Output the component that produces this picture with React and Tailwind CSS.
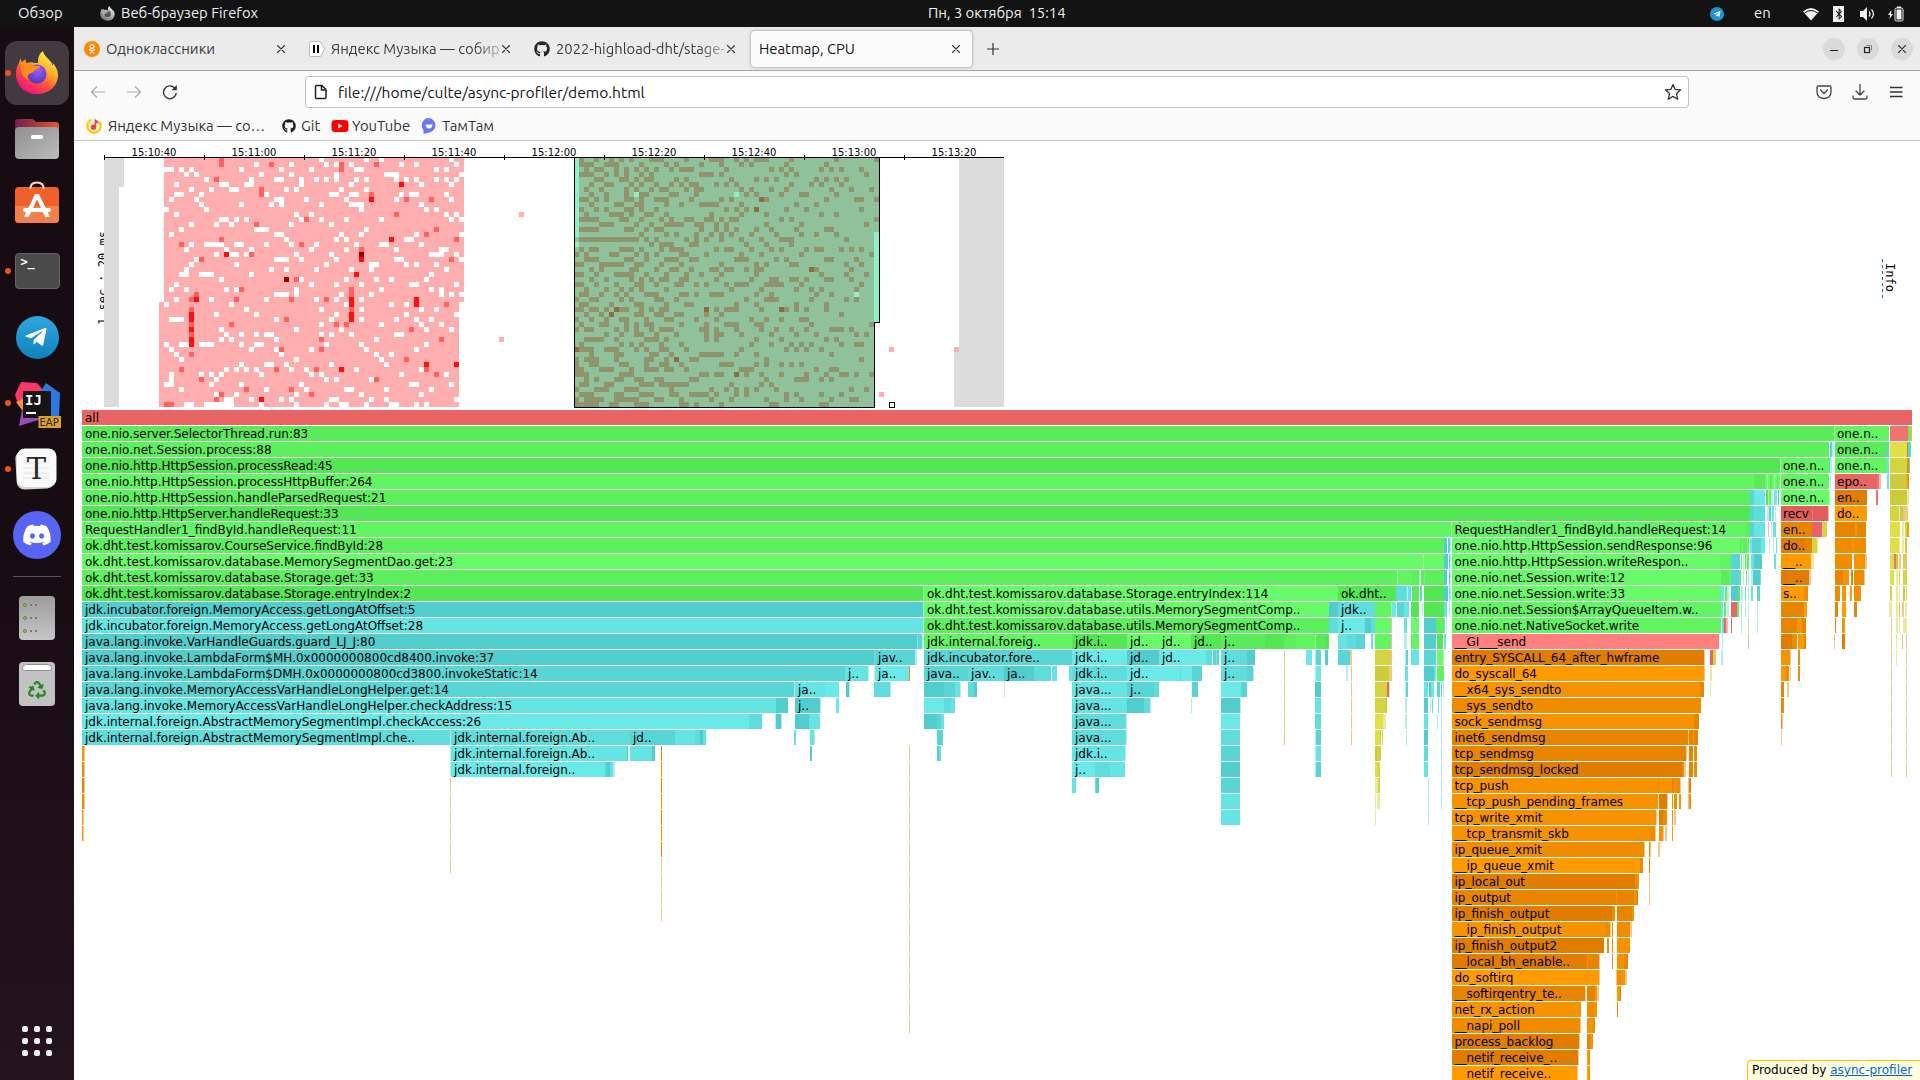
import React from "react";
import { FaGithub, FaYoutube, FaDiscord, FaTelegramPlane, FaRecycle, FaOdnoklassniki, FaBluetoothB } from "react-icons/fa";

const UI = "font-['Ubuntu','Noto_Sans',sans-serif]";

/* ---------- heat map ---------- */

const expand = (s) =>
  s.split(" ").filter(Boolean).flatMap((p) => {
    const [a, b] = p.split("-").map(Number);
    return b === undefined ? [a] : Array.from({ length: b - a + 1 }, (_, i) => a + i);
  });

// "blank columns | warm columns | hot columns | darkest columns", one entry per 20 ms row
const LEFT = `31 40 43 57|11
18 25 32 34 37 47 50 58|11 21 35 42
0 1 3 5 15 23 29 38 39 54 56|35
4 6 19 25 34 44 45 46 59|
8 17 22 23 27 30 32 34 38 40 46 48 50 54 56 58|10
2 11 12 16 17 27 37 51 57||47
5 9 13 14 24 26 35 40|19
2 3 7 20 33 34 37 38 47 49 50 56|19 41
1 6 22 23 28 36 46 57|48 53|41
7 15 21 23 31 37 38 39 51|
0 8 39 52 54|
2 26 29 56 58|46
11 12 14 16 27 31 36 43 57 59|28
5 10 13 25 33|18
3 18 19 20 40|54
1 22 23 35 39 50 59|52
24 34 36 48 49|11 58|45
5 8 9 10 11 14 15 20 25 30 38 43 44 51|3 27
4 12 17 29 36 46 55 56|39
10 13 14 16 26 33 53 54 55 58|17|12|39
6 22 23 24 27 34 46 47 59|7 57|39
5 14 32 41 42 48 50 54|
4 21 24 30 37 41 56|
3 4 7 8 9 17 53||38
11 27 36 42 45 52|26||24
2 29 34 39 49 50 58|
1 4 12 14 26 43 53 55|15 37
22 23 24 26 35 41 55 57 59|6 37
2 9 20 30 34 39|5 14 25 32|6 37 50
0 13 36 45 48|56|37 50
16 31 39 51 54|5 37
10 18 34 48 58||5 37
1 2 3 22 33 39 46 50 53|24|5 37
31 43 51 55|5 13 34 36
11 26 35 52 57|49|5
12 15 18 20 21 31 33 37 46 47|5
11 13 22 42|31 55|5
0 3 4 7 8 9 15 18 19 32 39 52||5
1 17 22 29 40 50|23 31
2 23 42 45|5
3 26 43|48
15 20 21 24 33 44||52 58
12 14 16 18 25 28 38 51|3 22 30 52|35
1 7 9 11 19 29 31 47 56|54
1 10 32 34 41|7 42
0 1 9 15 27 49 50 57|
3 20 28 36 37 44 53|16 25
10 14 26 39 51|11 29
12 13 17 23 25 33 34 41 44 58|10|19
4 5 8-13 19 26 32 35 36 40 45 46 50 52|0 1`.split("\n");

// "cooler columns | hot columns | empty columns" inside the selection
const RIGHT = `1 4 7 9 11 15-17 22 27-29 32 34 36-38 43 52 60
1-3 6-8 13 18 20 25 29 33 35 42 50
2 4 5 8 10 12 14 16 19 21-23 30 39 41 43 49 51 53 57
1-3 6 8 10 13 15 25-27 29 42 44 58
4 5 9 10 12 14 15 20 22 31 36 38 40 48 50 52 54
3 6 7 11 13 16 19 21 23 24 28 30 32 43 47 49 53
2 5 10 12 15 17 18 22 24 25 33 35 39 42 51 55 59
3 6 10 13 14 19 20 24 34 36 41 45 46 52||12 32
1 2 4 6 10 11 13 16-18 23 29 31 38 50 56 57 60|37
3 8 9 12 13 18 21 25-28 33 44 48
1 4 6 10 11 13 16 30 32 34 42 46 57|36
2 7-9 11 14 15 18 27 33 38 49 52
1-4 9 10 13 17 19 22 23 26 27 29 31 32 41 43 60
5-7 12 15 18-21 24 25 28 30 38 45 58
1-4 10 11 14 16 17 25 28 30 32 36 39 44 50 51
13 18 20 24 27 29 31 35 40 45 48 52
1-12 14 16 22 24 26 29 33 37 41-43 54
15 17-19 23 24 34 38 43
1 3 4 9-11 13 17 19-21 28 30 31 35 39 41 46 48 49 53 55 57
0 2 7 8 12 14 16 21 22 26 33 37 45 59
2-4 10 11 14 18-20 23 24 32-34 40 42 50 51 56
0 1 5-9 12 13 17 21 29 36 38 43 44 54 57
3 5 11 12 16 19 20 23 27 28 30 31 34 36 37 48 55|47
0 1 4 8-11 14 18 22 25 29 36 49 54 58
3 6 11 13 15 17 18 21 22 28 35 39 40 43 44 46 50 51 55
0 1 4 8 12 13 16 20 21 24 26 30 32-34 38-41 45 57
2 6 9 11 13 18 31 37 44 47 49 56
1 2 5 8 10 14-16 21 22 24 27-29 36 39 48 51||56
0 3 4 9 11 16 17 20 34 38-40 47 54 56
1 2 7 12 13 18 22 23 32 36 44 50
0 1 3 4 6 9 10 13 15 17 18 28 30-32 37 42 44 46 50|8 26 41
2 5 12 13 16 17 20 21 26 29 53|7
0 3 6 9 10 14 18 19 24 28 35 38 41 45 46
1 5 6 10 12 14 15 21 26 30-32 36 37 47 59
0 2 3 8 10 12 15 17-19 25 26 28 32 37 40 43 46 51-53 55
6 9 12 13 16 20 26 28 29 33 39 44 48 56 58
2-5 8 14-16 18 26 28 36 41 50 52
1 9 11 13 17 21 35 39 43 45 47 53 56 57
1-3 6-8 12 14 17 18 22 33 42 44 46 49|0
3 8 9 15 16 19 25-29 32 36 51
0 2-4 8 14 15 18 23 24 38 57|20
0 3 4 9 10 14 17 18 21 29-31 36 38 41 43 45
0 1 5-7 11 14-16 18 19 22 33-35 48 51 52
0-2 9-11 25 26 28 29 34 37 41 46 50 53 54 56 59|32
2 4 8 9 12 13 16 17 23 24 38 44-46 49 51
1 2 6 7 13-15 17-22 31 37 39
0 4-6 10-12 19 27 30 32 34 36 40 55 58
1-3 8 9 13-15 19 20 23-26 28 32 34 42 44 49 53
0 2-5 8-12 16 17 21 27 31 38 42 45 51 55 56
0-4 7 8 12-14 21 22 24 29 39 40 49 50`.split("\n");

const GX = 104;
const GY = 157;

function Cell({ c, r, fill, w = 1, h = 1 }) {
  return <rect x={GX + c * 5} y={GY + r * 5} width={w * 5} height={h * 5} fill={fill} />;
}

function HeatMap() {
  const cells = [];
  const put = (c, r, fill) => cells.push(<Cell key={`${c}-${r}-${fill}`} c={c} r={r} fill={fill} />);
  LEFT.forEach((line, r) => {
    const [blank, warm, hot, dark] = line.split("|").map((p) => expand(p || ""));
    blank.forEach((c) => put(12 + c, r, "#ffffff"));
    (warm || []).forEach((c) => put(12 + c, r, "#ff6060"));
    (hot || []).forEach((c) => put(12 + c, r, "#ff1010"));
    (dark || []).forEach((c) => put(12 + c, r, "#9c0000"));
  });
  RIGHT.forEach((line, r) => {
    const [cool, hot, empty] = line.split("|").map((p) => expand(p || ""));
    cool.forEach((c) => put(94 + c, r, "#8f946c"));
    (hot || []).forEach((c) => put(94 + c, r, "#8f6b44"));
    (empty || []).forEach((c) => put(94 + c, r, "#8ff0c8"));
  });
  const labels = ["15:10:40", "15:11:00", "15:11:20", "15:11:40", "15:12:00", "15:12:20", "15:12:40", "15:13:00", "15:13:20"];
  return (
    <svg className="block h-[269px] w-[1846px] shrink-0" viewBox="74 141 1846 269" shapeRendering="crispEdges">
      <text transform="translate(107 325) rotate(-90)" fontFamily="DejaVu Sans Mono, monospace" fontSize="12">1 sec : 20 ms</text>
      <rect x="104" y="150" width="900" height="257" fill="#fff" />
      <Cell c={0} r={0} w={4} h={6} fill="#dcdcdc" />
      <Cell c={0} r={6} w={3} h={44} fill="#dcdcdc" />
      <Cell c={171} r={0} w={9} h={39} fill="#dcdcdc" />
      <Cell c={170} r={39} w={10} h={11} fill="#dcdcdc" />
      <Cell c={12} r={0} w={60} h={29} fill="#ffaeb0" />
      <Cell c={11} r={29} w={1} h={1} fill="#ffaeb0" />
      <Cell c={11} r={30} w={60} h={20} fill="#ffaeb0" />
      <Cell c={12} r={29} w={59} h={1} fill="#ffaeb0" />
      <Cell c={94} r={0} w={61} h={33} fill="#8fc29a" />
      <Cell c={94} r={33} w={60} h={17} fill="#8fc29a" />
      <Cell c={94} r={0} h={16} fill="#8ff0c8" />
      <Cell c={94} r={17} h={1} fill="#8ff0c8" />
      <Cell c={154} r={15} h={18} fill="#8ff0c8" />
      {cells}
      {[[83, 11], [79, 36], [157, 38], [170, 38], [155, 47]].map(([c, r]) => (
        <Cell key={c} c={c} r={r} fill="#ffaeb0" />
      ))}
      <path d="M574.5 157V407.500H874.500V322.500H879.500V157" fill="none" stroke="#000" />
      <rect x="889.500" y="402.500" width="5" height="5" fill="#ffffc0" stroke="#000" />
      <rect x="104" y="157" width="900" height="1" fill="#000" />
      {labels.map((t, i) => (
        <g key={t}>
          <rect x={104 + i * 100} y="155" width="1" height="5" fill="#000" />
          <text x={154 + i * 100} y="156" textAnchor="middle" fontFamily="DejaVu Sans, sans-serif" fontSize="10">{t}</text>
        </g>
      ))}
      <path d="M1882.500 259V298" stroke="#1767c0" strokeDasharray="3 3" />
      <text transform="translate(1885.500 263) rotate(90)" fontFamily="DejaVu Sans Mono, monospace" fontSize="12">Info</text>
    </svg>
  );
}

/* ---------- flame graph ---------- */

const SHADE = {
  g0: "#54e654", g1: "#59eb59", g2: "#5eef5e", g3: "#63f463", g4: "#69fa69", g5: "#a8f5a8",
  c0: "#52cdcd", c1: "#5ad5d5", c2: "#60dcdc", c3: "#66e3e3", c4: "#6be8e8", c5: "#b4eded",
  o0: "#e07d00", o1: "#e88500", o2: "#f08c00", o3: "#f79300", o4: "#ff9a00", o5: "#f6c688",
  y0: "#cbcb3b", y1: "#d4d440", y2: "#e0e046", y5: "#eaea9c",
  r0: "#e35c5c", r1: "#e96565", r2: "#f27272", r3: "#ff7e7e", r5: "#f6b4b4",
};

// one line per stack depth: "start end shade label", frames separated by ";"
const FRAMES = `82 1912 r1 all
82 1834 g1 one.nio.server.SelectorThread.run:83;1834 1835 g5;1835 1889 g3 one.n..;1890 1908 r2;1908 1910 g2;1910 1912 y0
82 1829 g2 one.nio.net.Session.process:88;1830 1832 c1;1832 1834 c5;1835 1887 g1 one.n..;1887 1889 c1;1890 1907 y2;1907 1908 o1;1908 1911 c1
82 1780 g0 one.nio.http.HttpSession.processRead:45;1780 1781 g5;1781 1829 g3 one.n..;1829 1830 c1;1830 1832 c5;1835 1887 g3 one.n..;1887 1889 c3;1890 1907 y1;1907 1909 o2;1909 1910 c1
82 1754 g3 one.nio.http.HttpSession.processHttpBuffer:264;1754 1765 g1;1765 1780 g4;1767 1768 g5;1770 1772 g1;1774 1775 g5;1777 1778 g1;1781 1829 g3 one.n..;1830 1831 c5;1835 1877 r1 epo..;1877 1879 r2;1879 1881 r5;1887 1889 c3;1890 1907 y0;1907 1909 o3
82 1750 g2 one.nio.http.HttpSession.handleParsedRequest:21;1750 1754 c1;1754 1765 c4;1766 1768 g0;1768 1769 g5;1769 1771 g3;1771 1773 c5;1774 1777 c4;1778 1779 c0;1781 1829 g4 one.n..;1829 1830 g5;1835 1867 o0 en..;1876 1878 r2;1890 1907 y0;1907 1909 y5
82 1750 g0 one.nio.http.HttpServer.handleRequest:33;1750 1754 c1;1754 1765 c2;1767 1769 c5;1769 1771 c1;1772 1774 c4;1775 1776 c5;1781 1812 r0 recv;1812 1813 r2;1813 1828 r0;1828 1829 r5;1835 1867 o4 do..;1890 1899 y1;1899 1900 y5;1900 1903 y0;1903 1905 r5;1905 1907 y2;1907 1908 o5
82 1451 g3 RequestHandler1_findById.handleRequest:11;1451 1452 g5;1452 1745 g3 RequestHandler1_findById.handleRequest:14;1745 1750 g2;1750 1754 c1;1754 1765 c3;1768 1769 r5;1771 1772 c5;1773 1776 c3;1781 1812 o1 en..;1812 1822 r1;1822 1823 o5;1823 1827 y1;1835 1866 o1;1855 1857 o3;1890 1900 y2;1902 1904 y5;1905 1907 y1;1907 1909 o4
82 1444 g2 ok.dht.test.komissarov.CourseService.findById:28;1444 1447 c0;1448 1450 c1;1450 1451 c5;1452 1740 g4 one.nio.http.HttpSession.sendResponse:96;1740 1749 g2;1742 1743 g4;1747 1748 g4;1750 1752 c4;1752 1761 c1;1761 1765 c4;1769 1770 c5;1773 1774 c5;1776 1777 c3;1781 1805 o0 do..;1805 1812 o1;1812 1817 y1;1817 1818 y5;1835 1866 o2;1852 1854 o3;1890 1899 y2;1899 1900 y5;1902 1904 y5;1905 1907 y0
82 1423 g4 ok.dht.test.komissarov.database.MemorySegmentDao.get:23;1423 1424 g5;1424 1444 g4;1444 1448 c0;1449 1450 c1;1450 1451 c5;1452 1720 g4 one.nio.http.HttpSession.writeRespon..;1720 1731 g3;1731 1740 c1;1741 1742 g3;1743 1744 c5;1745 1749 g2;1746 1747 g5;1751 1754 c3;1754 1762 c0;1774 1776 c3;1781 1811 o4 __..;1811 1814 y5;1835 1852 o2;1854 1865 o3;1865 1867 o5;1890 1894 y2;1894 1896 r2;1896 1898 y0;1899 1901 o5;1903 1907 y1;1906 1907 r5
82 1397 g2 ok.dht.test.komissarov.database.Storage.get:33;1397 1398 g5;1398 1412 g3;1412 1419 g2;1419 1420 g5;1421 1444 g2;1424 1425 g4;1444 1447 c0;1449 1450 c1;1450 1451 c5;1452 1721 g4 one.nio.net.Session.write:12;1721 1729 g1;1729 1731 g3;1731 1740 c1;1740 1741 g3;1743 1744 c5;1746 1747 g3;1748 1749 c5;1751 1753 c5;1753 1760 c0;1760 1761 c3;1781 1809 o0 __..;1809 1811 o5;1835 1843 o1;1843 1849 o3;1851 1853 o1;1854 1864 o2;1864 1865 o5;1890 1894 y2;1896 1898 y5;1899 1900 y1;1903 1907 y1
82 923 g0 ok.dht.test.komissarov.database.Storage.entryIndex:2;923 924 g5;924 1338 g4 ok.dht.test.komissarov.database.Storage.entryIndex:114;1338 1396 g0 ok.dht..;1396 1406 c2;1406 1411 c3;1407 1408 c5;1412 1419 g1;1420 1422 c1;1424 1444 g0;1444 1448 c0;1449 1450 c4;1450 1451 c5;1452 1721 g4 one.nio.net.Session.write:33;1721 1724 c4;1725 1727 g3;1727 1729 c5;1731 1738 c0;1738 1740 g1;1741 1743 c5;1745 1746 c3;1748 1749 c5;1751 1753 c3;1757 1760 c1;1781 1804 o4 s..;1804 1808 o2;1835 1840 o2;1842 1846 o3;1850 1852 o4;1854 1859 o2;1859 1861 o3;1890 1892 y1;1896 1898 y5;1899 1900 y5;1903 1905 y0;1906 1907 y2
82 923 c0 jdk.incubator.foreign.MemoryAccess.getLongAtOffset:5;923 924 c5;924 1329 g4 ok.dht.test.komissarov.database.utils.MemorySegmentComp..;1329 1338 c0;1338 1375 c2 jdk..;1375 1391 g3;1391 1392 g5;1392 1396 c4;1397 1404 c1;1404 1409 c3;1411 1419 g0;1422 1423 c5;1424 1444 g0;1444 1447 c3;1449 1450 c5;1452 1721 g3 one.nio.net.Session$ArrayQueueItem.w..;1721 1723 c4;1724 1726 g2;1727 1729 c5;1731 1737 r1;1737 1739 g3;1741 1742 c5;1745 1746 c5;1748 1749 c5;1757 1758 c5;1781 1804 o1;1804 1807 o4;1835 1838 o1;1842 1846 o4;1854 1857 o1;1889 1892 y5;1896 1898 y5;1899 1900 y1;1902 1904 o5;1905 1907 y5
82 923 c3 jdk.incubator.foreign.MemoryAccess.getLongAtOffset:28;923 924 c5;924 1329 g2 ok.dht.test.komissarov.database.utils.MemorySegmentComp..;1329 1338 c2;1338 1365 c4 j..;1365 1371 c0;1371 1375 c2;1375 1391 g4;1391 1392 r5;1404 1407 c3;1411 1419 g4;1424 1436 c0;1436 1444 g2;1444 1445 c3;1446 1447 c5;1452 1721 g3 one.nio.net.NativeSocket.write;1722 1724 c2;1724 1726 r1;1726 1728 r5;1731 1732 r1;1741 1742 c5;1748 1749 g5;1757 1758 c5;1781 1797 o1;1797 1802 o3;1802 1806 o1;1835 1836 o2;1842 1845 o3;1891 1892 o5;1896 1898 y5;1899 1900 y5;1903 1907 y5
82 917 c0 java.lang.invoke.VarHandleGuards.guard_LJ_J:80;917 918 c4;918 922 c1;922 923 c5;924 1072 g3 jdk.internal.foreig..;1072 1127 g0 jdk.i..;1127 1159 g4 jd..;1159 1191 g4 jd..;1191 1221 g0 jd..;1221 1247 g1 j..;1247 1265 g1;1265 1284 g0;1284 1296 g2;1296 1306 g3;1306 1315 g3;1315 1316 g5;1316 1325 g1;1325 1329 g0;1338 1347 c3;1347 1356 c2;1356 1365 c1;1371 1373 c3;1375 1391 g3;1391 1392 r5;1404 1407 c5;1411 1419 g3;1424 1436 c0;1437 1443 g0;1444 1446 c3;1452 1710 r3 __GI___send;1710 1719 r3;1722 1723 c5;1748 1749 r5;1781 1792 o0;1792 1797 o2;1798 1804 o4;1804 1806 o1;1834 1835 o5;1842 1845 o0;1891 1892 o5;1896 1897 y5;1902 1903 o5;1906 1907 r5
82 874 c0 java.lang.invoke.LambdaForm$MH.0x0000000800cd8400.invoke:37;874 875 c3;875 915 c1 jav..;915 917 c5;924 1068 c1 jdk.incubator.fore..;1068 1072 c1;1072 1127 c4 jdk.i..;1127 1159 c0 jd..;1159 1191 c4 jd..;1191 1206 c4;1206 1212 c2;1213 1219 c1;1216 1217 c4;1221 1247 c2 j..;1247 1255 c0;1284 1285 o5;1306 1312 c4;1315 1316 c5;1316 1321 c1;1325 1328 c0;1338 1350 c1;1350 1352 o5;1375 1391 y1;1391 1392 r5;1405 1406 c5;1406 1408 c1;1411 1419 c3;1424 1436 c1;1437 1443 g4;1443 1444 g5;1452 1704 o0 entry_SYSCALL_64_after_hwframe;1704 1705 o5;1710 1713 r1;1713 1716 y1;1721 1723 c5;1781 1790 o3;1790 1791 o5;1798 1800 o2;1891 1892 o5;1896 1897 y5;1906 1907 o5
82 845 c1 java.lang.invoke.LambdaForm$DMH.0x0000000800cd3800.invokeStatic:14;845 868 c3 j..;868 869 c5;874 875 c5;875 909 c4 ja..;909 910 o2;924 968 c1 java..;968 1004 c2 jav..;1004 1034 c0 ja..;1034 1051 c2;1052 1057 c3;1069 1072 c3;1072 1127 c2 jdk.i..;1127 1159 c4 jd..;1159 1192 c4;1180 1181 c2;1192 1202 c1;1221 1247 c2 j..;1247 1253 c1;1253 1254 c5;1284 1285 o5;1315 1316 c5;1316 1321 c4;1346 1348 c5;1351 1352 o5;1375 1389 y0;1389 1391 y2;1391 1392 r5;1405 1408 c3;1424 1434 c0;1434 1436 c3;1437 1444 g3;1441 1442 g1;1452 1704 o4 do_syscall_64;1704 1705 o5;1710 1712 y5;1781 1785 o4;1785 1789 o2;1790 1791 o5;1798 1800 o2;1891 1892 o5;1906 1907 o5
82 794 c1 java.lang.invoke.MemoryAccessVarHandleLongHelper.get:14;794 795 c5;795 825 c3 ja..;825 833 c4;833 839 c4;846 849 c0;849 850 c5;874 890 c2;890 891 c5;924 944 c0;944 955 c1;955 960 c3;960 961 c5;968 974 c2;974 977 c0;1004 1005 c5;1072 1127 c3 java...;1127 1154 c1 j..;1154 1159 c2;1192 1198 c1;1221 1241 c4;1241 1247 c1;1284 1285 o5;1315 1321 c0;1351 1352 o5;1375 1387 y1;1387 1389 r1;1389 1390 y5;1405 1406 c5;1406 1408 c1;1424 1428 c3;1429 1431 c0;1431 1434 c4;1437 1440 c1;1441 1442 c3;1443 1444 c5;1452 1700 o3 __x64_sys_sendto;1700 1704 o1;1710 1711 y5;1781 1784 o1;1787 1789 o5;1891 1892 o5;1906 1907 o5
82 776 c3 java.lang.invoke.MemoryAccessVarHandleLongHelper.checkAddress:15;776 788 c0;795 820 c0 j..;820 821 c5;836 839 c4;924 944 c4;944 951 c2;951 955 c3;1072 1127 c3 java...;1127 1144 c0;1144 1150 c2;1150 1151 c5;1191 1192 c5;1221 1240 c0;1240 1241 c5;1284 1285 o5;1315 1321 c3;1351 1352 o5;1375 1386 y1;1386 1387 y0;1405 1407 c5;1424 1428 c0;1430 1431 c5;1432 1433 c3;1438 1439 c3;1441 1442 c5;1452 1701 o2 __sys_sendto;1781 1783 o1;1783 1784 o3;1891 1892 o5;1906 1907 o5
82 749 c4 jdk.internal.foreign.AbstractMemorySegmentImpl.checkAccess:26;749 762 c2;775 776 c5;776 781 c0;781 782 c5;795 809 c0;809 820 c3;924 937 c0;937 941 c1;941 944 c3;1072 1126 c2 java...;1126 1127 c5;1221 1240 c4;1284 1285 o5;1315 1321 c2;1351 1352 o5;1375 1383 y2;1383 1386 y5;1405 1407 c5;1424 1428 c3;1437 1438 c5;1441 1442 c5;1452 1694 o3 sock_sendmsg;1694 1699 o1;1781 1782 o2;1782 1783 o5;1891 1892 o5;1906 1907 o5
82 450 c2 jdk.internal.foreign.AbstractMemorySegmentImpl.che..;450 451 c5;451 630 c2 jdk.internal.foreign.Ab..;630 660 c1 jd..;660 675 c1;675 695 c3;695 700 c2;700 703 c0;703 706 c3;794 796 c3;810 814 c3;814 815 c5;937 943 c1;1072 1126 c2 java...;1126 1127 c5;1221 1240 c2;1284 1285 o5;1315 1316 c5;1316 1321 c1;1351 1352 o5;1375 1380 y2;1380 1381 y0;1382 1383 y1;1406 1407 c5;1424 1428 c0;1441 1442 c5;1452 1688 o1 inet6_sendmsg;1688 1689 o5;1689 1698 o1;1693 1694 o3;1781 1782 o5;1891 1892 o5;1906 1907 o5
82 84 o3;84 85 o5;450 451 c5;451 627 c3 jdk.internal.foreign.Ab..;627 628 c0;630 652 c3;652 655 c0;661 662 o1;810 812 c0;909 910 o5;937 939 c0;939 941 c3;1072 1125 c3 jdk.i..;1125 1126 c5;1221 1240 c1;1315 1316 c5;1316 1321 c3;1375 1377 y0;1377 1381 y1;1424 1428 c2;1441 1442 c5;1452 1686 o1 tcp_sendmsg;1686 1687 o5;1689 1693 o1;1694 1697 o2;1891 1892 o5;1906 1907 o5
82 84 o2;84 85 o5;450 451 c5;451 605 c4 jdk.internal.foreign..;605 607 c1;607 610 c0;610 613 c3;613 615 c5;661 662 o2;909 910 o5;1072 1095 c4 j..;1095 1110 c2;1110 1118 c3;1118 1125 c3;1221 1240 c0;1315 1316 c5;1316 1321 c1;1375 1378 y2;1378 1380 y1;1424 1428 c3;1441 1442 c5;1452 1682 o0 tcp_sendmsg_locked;1682 1684 o2;1684 1686 o5;1689 1693 o1;1694 1697 o2;1891 1892 o5;1906 1907 o5
82 84 o1;84 85 o5;450 451 o5;661 662 o1;909 910 o5;1072 1076 c3;1095 1096 c3;1096 1099 c0;1221 1240 c1;1375 1378 y5;1378 1380 y1;1428 1429 c5;1441 1442 c5;1452 1658 o3 tcp_push;1658 1659 o2;1659 1672 o3;1672 1674 o1;1674 1676 o3;1676 1680 o2;1680 1681 o5;1688 1689 o5;1689 1691 o1
82 84 o2;84 85 o5;450 451 o5;661 662 o2;909 910 o5;1221 1240 c3;1375 1376 y5;1377 1380 y5;1428 1429 c5;1441 1442 c5;1452 1658 o3 __tcp_push_pending_frames;1659 1667 o0;1667 1668 o5;1672 1673 o2;1674 1677 o2;1679 1681 o3;1688 1689 o5;1689 1691 o2
82 83 o3;83 84 o5;450 451 o5;661 662 o1;909 910 o5;1221 1240 c3;1375 1376 y5;1428 1429 c5;1452 1656 o3 tcp_write_xmit;1656 1657 o5;1659 1663 o0;1663 1667 o2;1672 1673 o3;1674 1676 o5
82 83 o3;83 84 o5;450 451 o5;661 662 o2;909 910 o5;1452 1650 o3 __tcp_transmit_skb;1650 1655 o2;1655 1656 o5;1659 1663 o3;1663 1664 o5;1665 1667 o5;1672 1673 o4
450 451 o5;661 662 o1;909 910 o5;1452 1642 o2 ip_queue_xmit;1642 1644 o2;1644 1645 o5;1649 1650 o1;1650 1651 o5;1658 1660 o5
450 451 o5;661 662 o5;909 910 o5;1452 1640 o4 __ip_queue_xmit;1640 1643 o2;1649 1650 o1
661 662 o5;909 910 o5;1452 1635 o0 ip_local_out;1635 1638 o2;1638 1639 o3;1649 1650 o5
661 662 o5;909 910 o5;1452 1616 o1 ip_output;1616 1617 o3;1617 1634 o1;1634 1636 o3;1636 1638 o1;1649 1650 o5
661 662 o5;909 910 o5;1452 1612 o0 ip_finish_output;1612 1615 o2;1617 1632 o1;1632 1634 o3
909 910 o5;1452 1605 o3 __ip_finish_output;1605 1610 o2;1610 1611 o5;1612 1613 o2;1617 1630 o2;1630 1632 o5
909 910 o5;1452 1604 o0 ip_finish_output2;1607 1609 o2;1612 1613 o2;1617 1629 o3;1629 1630 o2
909 910 o5;1452 1587 o0 __local_bh_enable..;1587 1588 o3;1588 1599 o1;1599 1600 o5;1612 1613 o2;1617 1624 o3;1624 1628 o1
909 910 o5;1452 1587 o4 do_softirq;1587 1588 o3;1588 1599 o4;1599 1600 o5;1616 1617 o5;1617 1621 o2;1621 1625 o3;1625 1627 o5
909 910 o5;1452 1585 o1 __softirqentry_te..;1585 1586 o5;1587 1595 o1;1595 1597 o3;1597 1599 o5;1617 1619 o4;1619 1621 o2
909 910 o5;1452 1581 o3 net_rx_action;1587 1594 o2;1594 1597 o3;1617 1618 o2
909 910 o5;1452 1580 o2 __napi_poll;1580 1581 o5;1587 1593 o3;1593 1595 o2
1452 1579 o0 process_backlog;1579 1580 o5;1587 1590 o1;1590 1593 o3
1452 1578 o0 __netif_receive_..;1578 1579 o5;1587 1589 o4;1589 1590 o2
1452 1577 o4 __netif_receive..;1577 1578 o5;1587 1589 o4;1589 1590 o3`
  .split("\n")
  .map((l) =>
    l.split(";").map((f) => {
      const [a, b, s, ...t] = f.split(" ");
      return { a: +a, b: +b, s, t: t.join(" ") };
    })
  );

function FlameGraph() {
  return (
    <svg className="block h-[670px] w-[1846px] shrink-0" viewBox="74 410 1846 670">
      {FRAMES.map((row, i) => (
        <g key={i}>
          {row.map((f, j) => (
            <rect key={j} x={f.a} y={410 + i * 16} width={f.b - f.a} height="15" fill={SHADE[f.s]} shapeRendering="crispEdges" />
          ))}
          {row.filter((f) => f.t).map((f, j) => (
            <text key={j} x={f.a + (f.a > 1700 ? 2 : f.a > 1400 ? 2.5 : 3)} y={422 + i * 16} fontFamily="DejaVu Sans, sans-serif" fontSize="12">{f.t}</text>
          ))}
        </g>
      ))}
    </svg>
  );
}

/* ---------- icons ---------- */

function FirefoxIcon({ className, grey }) {
  const id = grey ? "ffg" : "ffc";
  return (
    <svg className={className} viewBox="0 0 44 44">
      <defs>
        <linearGradient id={id} x1="0.8" y1="0.05" x2="0.25" y2="0.95">
          <stop offset="0" stopColor={grey ? "#e8e8e8" : "#fff44f"} />
          <stop offset="0.35" stopColor={grey ? "#c4c4c4" : "#ffb02a"} />
          <stop offset="0.68" stopColor={grey ? "#9a9a9a" : "#ff4a40"} />
          <stop offset="1" stopColor={grey ? "#777" : "#ee1480"} />
        </linearGradient>
        <radialGradient id={id + "2"} cx="0.55" cy="0.3" r="0.7">
          <stop offset="0" stopColor={grey ? "#666" : "#a05cf0"} />
          <stop offset="1" stopColor={grey ? "#444" : "#4b3bc4"} />
        </radialGradient>
      </defs>
      <path d="M28 0c1 5 5 7 8 11 1 1 1 2 2 4 0-2 0-3-1-4 4 4 6 9 6 13 0 11-9 19-21 19S1 35 1 23c0-5 1-8 3-11 0-2 1-3 2-5 0 2 0 3 1 4 1-1 2-2 4-3-1 2 0 3 1 4 3-1 5-1 7 0h4c0-6 1-9 5-12z" fill={`url(#${id})`} />
      <circle cx="22" cy="23" r="9.500" fill={`url(#${id}2)`} />
      <path d="M6 12c3-1 6 0 8 2 2-1 4 0 5 1h6c0 2-2 3-5 4-1 1-2 3-4 3-3 1-5 4-2 7-5-2-8-6-8-11 0-2 0-4 0-6z" fill={grey ? "#aaa" : "#ff8e1e"} />
    </svg>
  );
}

function CloseX({ className = "h-2.5 w-2.5 shrink-0" }) {
  return (
    <svg className={className} viewBox="0 0 10 10">
      <path d="M1.500 1.500l7 7M8.500 1.500l-7 7" stroke="#3a3a3a" strokeWidth="1.1" strokeLinecap="round" />
    </svg>
  );
}

function Slot({ children, dot }) {
  return (
    <div className="relative flex h-[66px] w-[74px] shrink-0 items-center justify-center">
      {dot && <span className="absolute left-[5px] top-[30px] h-1.5 w-1.5 rounded-full bg-[#e95420]" />}
      {children}
    </div>
  );
}

function Dock() {
  return (
    <aside className="flex w-[74px] shrink-0 flex-col bg-gradient-to-b from-[#160c12] via-[#180c13] to-[#25131d] pt-[13px]">
      <Slot dot>
        <div className="flex h-16 w-16 items-center justify-center rounded-xl bg-[#433a40]">
          <FirefoxIcon className="h-[44px] w-[44px]" />
        </div>
      </Slot>
      <Slot>
        <svg className="h-[46px] w-[46px]" viewBox="0 0 46 46">
          <defs>
            <linearGradient id="fold" x1="0" x2="1"><stop offset="0" stopColor="#6f1f50" /><stop offset="1" stopColor="#e4582a" /></linearGradient>
            <linearGradient id="fgrey" x1="0" y1="0" x2="1" y2="1"><stop offset="0" stopColor="#8f8f8f" /><stop offset="1" stopColor="#bcbcbc" /></linearGradient>
          </defs>
          <path d="M1 6q0-3 3-3h14q2 0 3 2l1 1h20q3 0 3 3v10H1z" fill="url(#fold)" />
          <rect x="1" y="11" width="44" height="32" rx="4" fill="url(#fgrey)" />
          <rect x="17" y="19" width="12" height="4" rx="1.500" fill="#fff" />
        </svg>
      </Slot>
      <Slot>
        <svg className="mb-[2px] h-[46px] w-[46px]" viewBox="0 0 46 46">
          <path d="M16 9q0-7.500 7-7.500t7 7.500" fill="none" stroke="#f4dfb6" strokeWidth="1.800" />
          <rect x="1" y="6" width="44" height="36" rx="4" fill="#f0602a" />
          <path d="M1 25h44v13q0 4-4 4H5q-4 0-4-4z" fill="#f2804c" />
          <path d="M16.200 8q.3-2 1.200-3.300M29.800 8q-.3-2-1.200-3.300" fill="none" stroke="#f4dfb6" strokeWidth="1.800" />
          <path d="M21 13h4l11 23h-4.800L23 18.500 14.800 36H10z" fill="#fff" />
          <rect x="9" y="27" width="28" height="4" rx="2" fill="#fff" />
        </svg>
      </Slot>
      <Slot dot>
        <div className="h-9 w-[45px] rounded border border-[#646464] bg-[#4a4a4a] pl-[5px] pt-[2px] font-['DejaVu_Sans_Mono',monospace] text-[12px] font-bold leading-3 tracking-[-0.2px] text-white">&gt;_</div>
      </Slot>
      <Slot>
        <div className="flex h-[43px] w-[43px] items-center justify-center rounded-full bg-gradient-to-b from-[#2fa6df] to-[#0c82bd]">
          <FaTelegramPlane className="mr-0.5 h-6 w-6 text-white" />
        </div>
      </Slot>
      <Slot dot>
        <svg className="h-[48px] w-[48px] overflow-visible" viewBox="0 0 48 48">
          <path d="M8 3l16 1 6 7-4 14H5L2 16z" fill="#f9376b" />
          <path d="M33 4l14 10-1 26-14 4-8-26z" fill="#2f78e4" />
          <path d="M3 23l9-4 6 12-6 4z" fill="#f6923b" />
          <path d="M9 31l6-4 20 12-10 2-19 6z" fill="#a04ab8" />
          <rect x="10" y="12" width="28" height="27" fill="#151515" />
          <text x="12" y="26" fontFamily="DejaVu Sans Mono, monospace" fontWeight="700" fontSize="14" fill="#fff">IJ</text>
          <rect x="13" y="33" width="10" height="2" fill="#fff" />
          <rect x="25.500" y="37" width="22.500" height="12" fill="#dba12f" />
          <text x="26.500" y="46.500" fontFamily="DejaVu Sans, sans-serif" fontSize="10" fill="#2b2210">EAP</text>
        </svg>
      </Slot>
      <Slot dot>
        <svg className="mr-0.5 h-[42px] w-[42px]" viewBox="0 0 42 42">
          <rect x="1" y="2" width="38" height="39" rx="8" fill="#d6d6d6" transform="rotate(-3 20 22)" />
          <rect x="2" y="0.500" width="39.500" height="38.500" rx="8" fill="#fafafa" />
          <path d="M8 10h26M8 15h26M8 20h26M8 25h26M8 30h26" stroke="#e2e2e2" />
          <text x="21.500" y="31" textAnchor="middle" fontFamily="DejaVu Serif, serif" fontSize="29" fill="#2a2a2a">T</text>
        </svg>
      </Slot>
      <Slot>
        <div className="flex h-12 w-12 items-center justify-center rounded-full bg-[#5865f2]">
          <FaDiscord className="h-[30px] w-[30px] text-white" />
        </div>
      </Slot>
      <div className="mx-[13px] mt-[8px] h-px shrink-0 bg-[#5b5156]" />
      <div className="h-[8px] shrink-0" />
      <Slot>
        <div className="flex h-11 w-9 flex-col justify-around rounded bg-gradient-to-b from-[#9c9c9c] to-[#c6c6c6] py-0.5 pl-1">
          {[0, 1, 2].map((i) => (
            <div key={i} className="flex items-center gap-[3px]">
              <span className="h-1 w-1 rounded-full border border-[#5f8a3a] bg-[#9ac46a]" />
              <span className="h-0.5 w-0.5 bg-[#777]" />
              <span className="h-0.5 w-0.5 bg-[#777]" />
            </div>
          ))}
        </div>
      </Slot>
      <Slot>
        <div className="flex h-11 w-9 flex-col items-center rounded bg-[#c2c2c2] pt-0.5">
          <div className="h-[7px] w-[30px] rounded-t-md rounded-b-sm border border-[#8f8f8f] bg-white" />
          <FaRecycle className="mt-2.5 h-[18px] w-[18px] text-[#26891f]" />
        </div>
      </Slot>
      <div className="mx-auto mb-[24px] mt-auto grid grid-cols-3 gap-x-[6px] gap-y-[6px]">
        {Array.from({ length: 9 }, (_, i) => (
          <span key={i} className="h-1.5 w-1.5 rounded-[2px] bg-[#f2f2f2]" />
        ))}
      </div>
    </aside>
  );
}

function TopBar() {
  return (
    <header className={`flex h-[27px] shrink-0 items-center bg-[#131313] text-[14.8px] leading-none text-[#f0f0f0] ${UI}`}>
      <span className="ml-[18px] w-[82px] whitespace-nowrap">Обзор</span>
      <FirefoxIcon grey className="h-[15px] w-[15px]" />
      <span className="ml-1.5 w-[807px] whitespace-nowrap">Веб-браузер Firefox</span>
      <span className="w-[782px] whitespace-pre">Пн, 3 октября  15:14</span>
      <span className="flex h-3.5 w-3.5 items-center justify-center rounded-full bg-[#1f93d0]">
        <FaTelegramPlane className="h-2 w-2 text-white" />
      </span>
      <span className="ml-[30px] w-[49px]">en</span>
      <svg className="h-4 w-4" viewBox="0 0 16 16">
        <path d="M0 5.500Q8-1.500 16 5.500L8 14.500z" fill="#f2f2f2" />
        <path d="M1.500 7Q8 2 14.500 7" fill="none" stroke="#131313" strokeWidth="1" />
      </svg>
      <span className="ml-[14px] flex h-4 w-[11px] items-center justify-center bg-[#f2f2f2]">
        <FaBluetoothB className="h-3 w-2.5 text-[#131313]" />
      </span>
      <svg className="ml-4 h-4 w-4" viewBox="0 0 16 16">
        <path d="M0 5h3l4-4v14l-4-4H0z" fill="#f2f2f2" />
        <path d="M9 5.500q2 2.500 0 5M11.500 3.500q4 4.500 0 9" fill="none" stroke="#f2f2f2" strokeWidth="1.300" />
      </svg>
      <svg className="ml-3 h-4 w-4" viewBox="0 0 16 16">
        <path d="M3.500 4L0 9h2l-.5 4L5 8H3z" fill="#f2f2f2" />
        <rect x="7" y="2" width="8" height="13" rx="1.500" fill="none" stroke="#f2f2f2" />
        <rect x="9" y="0.500" width="4" height="1.500" fill="#f2f2f2" />
        <rect x="8.500" y="3.500" width="5" height="10" fill="#f2f2f2" />
      </svg>
    </header>
  );
}

function Tab({ icon, title, active, fade }) {
  return (
    <div className={`mr-1 flex h-9 w-[221px] shrink-0 items-center rounded pl-2 pr-[11px] ${active ? "bg-[#fbfbfb] text-[#15141a] shadow-[0_0_3px_rgba(0,0,0,0.45)]" : "text-[#3c3b40]"}`}>
      {icon && <span className="mr-1.5 flex w-4 shrink-0 justify-center">{icon}</span>}
      <span className={`mt-px min-w-0 flex-1 whitespace-nowrap ${fade ? "[mask-image:linear-gradient(to_right,#000_84%,rgba(0,0,0,0.25))]" : ""}`}>{title}</span>
      <CloseX />
    </div>
  );
}

function Browser() {
  return (
    <main className="flex min-w-0 flex-1 flex-col bg-white">
      <div className={`flex h-[44px] shrink-0 items-center border-b border-[#a6a6a6] bg-[#ebebeb] pl-0.5 text-[14.8px] leading-5 ${UI}`}>
        <Tab title="Одноклассники" icon={<span className="flex h-4 w-4 items-center justify-center rounded-full bg-[#ff8800]"><FaOdnoklassniki className="h-2.5 w-2.5 text-white" /></span>} />
        <Tab fade title="Яндекс Музыка — собир" icon={
          <svg className="h-4 w-4" viewBox="0 0 16 16">
            <path d="M2 .5h9.500l4 7.500-4 7.500H2Q.5 15.500.5 14V2Q.5.5 2 .5z" fill="#fff" stroke="#bbb" />
            <rect x="4" y="4" width="2" height="8" /><rect x="8" y="4" width="2" height="8" />
          </svg>} />
        <Tab fade title="2022-highload-dht/stage-" icon={<FaGithub className="h-4 w-4 text-[#24292f]" />} />
        <Tab active title="Heatmap, CPU" />
        <svg className="ml-2.5 h-3.5 w-3.5" viewBox="0 0 14 14"><path d="M7 1v12M1 7h12" stroke="#333" strokeWidth="1.200" /></svg>
        <div className="ml-auto mr-[7px] flex gap-3">
          <span className="flex h-[22px] w-[22px] items-center justify-center rounded-full bg-[#dadada]"><span className="mt-1 h-px w-2 bg-[#222]" /></span>
          <span className="flex h-[22px] w-[22px] items-center justify-center rounded-full bg-[#dadada]">
            <svg className="h-2.5 w-2.5" viewBox="0 0 10 10"><path d="M3.500 1.500h5v5" fill="none" stroke="#888" /><rect x="1.500" y="3.500" width="5" height="5" fill="none" stroke="#222" strokeWidth="1.200" /></svg>
          </span>
          <span className="flex h-[22px] w-[22px] items-center justify-center rounded-full bg-[#dadada]"><CloseX /></span>
        </div>
      </div>

      <div className="flex h-[40px] shrink-0 items-center bg-[#fafafa] pt-px">
        <svg className="ml-4 h-4 w-4" viewBox="0 0 16 16" fill="none" stroke="#aaa" strokeWidth="1.200"><path d="M15 8H1.500M7 2.500L1.500 8 7 13.500" /></svg>
        <svg className="ml-5 h-4 w-4" viewBox="0 0 16 16" fill="none" stroke="#aaa" strokeWidth="1.200"><path d="M1 8h13.500M9 2.500l5.500 5.500L9 13.500" /></svg>
        <svg className="ml-5 h-4 w-4" viewBox="0 0 16 16" fill="none" stroke="#333" strokeWidth="1.400"><path d="M14.300 9A6.400 6.400 0 1 1 12.500 3.800L14 5.300" /><path d="M14.800 1v5.200H9.600z" fill="#333" stroke="none" /></svg>
        <div className="ml-[127px] flex h-8 w-[1384px] items-center rounded border border-[#c2c2c2] bg-white pl-[7px] pr-2">
          <svg className="h-4 w-4" viewBox="0 0 16 16" fill="none" stroke="#222" strokeWidth="1.500"><path d="M3.500 1.500h5.500l4 4v8q0 1-1 1h-8.500q-1 0-1-1v-11q0-1 1-1zM8.500 1.500v4.500h4.500" /></svg>
          <span className={`ml-[9px] flex-1 text-[15.6px] leading-5 text-[#15141a] ${UI}`}>file:///home/culte/async-profiler/demo.html</span>
          <svg className="-mr-0.5 h-[18px] w-[18px]" viewBox="0 0 18 18" fill="none" stroke="#333" strokeWidth="1.300" strokeLinejoin="round"><path d="M9 1.500l2.200 4.900 5.300.6-4 3.600 1.200 5.600L9 13.400l-4.700 2.800 1.200-5.600-4-3.600 5.300-.6z" /></svg>
        </div>
        <div className="ml-auto mr-4 flex gap-5">
          <svg className="h-4 w-4" viewBox="0 0 16 16" fill="none" stroke="#444" strokeWidth="1.300" strokeLinecap="round"><path d="M2.500 2h11q1.500 0 1.500 1.500v4.500q0 6-7 6.500Q1 14 1 8V3.500q0-1.500 1.500-1.500zM4.500 6L8 9.500 11.500 6" /></svg>
          <svg className="h-4 w-4" viewBox="0 0 16 16" fill="none" stroke="#444" strokeWidth="1.300" strokeLinecap="round"><path d="M8 .5V11M4 7l4 4 4-4M1 12v1.500q0 1.500 1.500 1.500h11q1.500 0 1.500-1.500V12" /></svg>
          <svg className="h-4 w-4" viewBox="0 0 16 16" stroke="#333" strokeWidth="1.300"><path d="M2 3.500h12.500M2 8h12.500M2 12.500h12.500" /></svg>
        </div>
      </div>

      <div className={`flex h-[30px] shrink-0 items-center border-b border-[#c6c6c6] bg-[#fafafa] pl-3 text-[14.8px] leading-5 text-[#333237] ${UI}`}>
        <svg className="h-4 w-4 shrink-0" viewBox="0 0 16 16">
          <circle cx="8" cy="8" r="6.700" fill="none" stroke="#fc0" strokeWidth="2.400" strokeDasharray="33 9" transform="rotate(-35 8 8)" />
          <circle cx="7.500" cy="9.300" r="2.700" fill="#f5402c" /><path d="M8.600 9.500V.8L12.500 3.500v2.200L10.200 5v4.500z" fill="#f5402c" />
        </svg>
        <span className="ml-1.5 w-[174px] shrink-0 whitespace-nowrap">Яндекс Музыка — со…</span>
        <FaGithub className="h-3.5 w-3.5 shrink-0 text-[#1b1f24]" />
        <span className="ml-[5px] w-[30px] shrink-0">Git</span>
        <FaYoutube className="h-[18px] w-[18px] shrink-0 text-[#f00]" />
        <span className="ml-[3px] w-[69px] shrink-0">YouTube</span>
        <svg className="h-4 w-4 shrink-0" viewBox="0 0 16 16"><path d="M8 0a7.300 7.300 0 0 1 0 14.500L2.500 16V12A7.300 7.300 0 0 1 8 0z" fill="#6a78f7" /><path d="M4.500 6.500h7q-.5 4-3.500 4t-3.500-4z" fill="#fff" /></svg>
        <span className="ml-[5px]">ТамТам</span>
      </div>

      <section className="relative flex flex-1 flex-col overflow-hidden">
        <HeatMap />
        <FlameGraph />
        <div className="absolute bottom-0 right-0 h-5 w-[173px] whitespace-nowrap rounded-tl border-l border-t border-[#ffc000] bg-[#ffffe0] pl-[4px] font-['DejaVu_Sans',sans-serif] text-[12px] leading-[19px] text-black">
          Produced by <span className="text-[#0366d6] underline">async-profiler</span>
        </div>
      </section>
    </main>
  );
}

export default function App() {
  return (
    <div className="flex h-[1080px] w-[1920px] flex-col overflow-hidden bg-white">
      <TopBar />
      <div className="flex min-h-0 flex-1">
        <Dock />
        <Browser />
      </div>
    </div>
  );
}
